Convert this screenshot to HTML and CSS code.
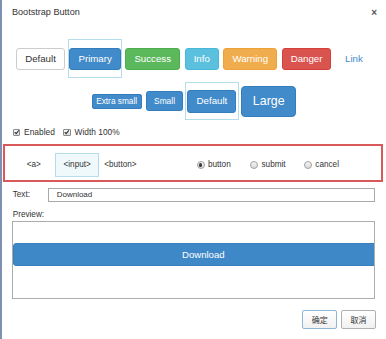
FILE: index.html
```html
<!DOCTYPE html>
<html>
<head>
<meta charset="utf-8">
<link rel="stylesheet" href="styles.css">
</head>
<body>
<div class="dialog">
  <div class="titlebar"><span class="title">Bootstrap Button</span><span class="close">×</span></div>

  <div class="row row1">
    <span class="btn btn-default">Default</span>
    <span class="btn btn-primary sel sel1">Primary</span>
    <span class="btn btn-success">Success</span>
    <span class="btn btn-info">Info</span>
    <span class="btn btn-warning">Warning</span>
    <span class="btn btn-danger">Danger</span>
    <span class="btn btn-link">Link</span>
  </div>

  <div class="row row2">
    <span class="btn btn-primary xs">Extra small</span>
    <span class="btn btn-primary sm">Small</span>
    <span class="btn btn-primary md sel sel2">Default</span>
    <span class="btn btn-primary lg">Large</span>
  </div>

  <div class="checks">
    <span class="cb"><svg viewBox="0 0 8 8" width="6" height="6"><path d="M1 4.2 L3.1 6.3 L7 1.6" fill="none" stroke="#333" stroke-width="1.6"/></svg></span>
    <span class="cblabel">Enabled</span>
    <span class="cb cb2"><svg viewBox="0 0 8 8" width="6" height="6"><path d="M1 4.2 L3.1 6.3 L7 1.6" fill="none" stroke="#333" stroke-width="1.6"/></svg></span>
    <span class="cblabel">Width 100%</span>
  </div>

  <div class="redbox">
    <span class="tag tag-a">&lt;a&gt;</span>
    <span class="tag tag-input">&lt;input&gt;</span>
    <span class="tag tag-button">&lt;button&gt;</span>
    <span class="radio r1"><span class="rc checked"></span>button</span>
    <span class="radio r2"><span class="rc"></span>submit</span>
    <span class="radio r3"><span class="rc"></span>cancel</span>
  </div>

  <div class="field">
    <span class="flabel">Text:</span>
    <span class="finput">Download</span>
  </div>

  <div class="plabel">Preview:</div>
  <div class="preview">
    <div class="pbtn">Download</div>
  </div>

  <div class="footer">
    <span class="fbtn focus">确定</span>
    <span class="fbtn">取消</span>
  </div>
</div>
</body>
</html>
```

FILE: styles.css
```css
html, body {
  margin: 0;
  padding: 0;
  background: #fff;
}
body {
  font-family: "Liberation Sans", Arial, "Noto Sans CJK SC", sans-serif;
  color: #333;
}
.dialog {
  border-left: 2px solid #7e91b3;
  height: 339px;
  box-sizing: border-box;
  overflow: hidden;
}
.titlebar {
  height: 24px;
  display: flex;
  align-items: center;
  justify-content: space-between;
  padding: 0 9px 0 10px;
  font-size: 9.1px;
  color: #333;
}
.close {
  font-size: 10px;
  font-weight: bold;
  color: #555;
}

.row {
  display: flex;
  justify-content: center;
  align-items: center;
  gap: 4.6px;
}
.row1 {
  margin-top: 23.7px;
  height: 22.3px;
}
.row2 {
  margin-top: 15.7px;
  height: 31.3px;
}
.btn {
  position: relative;
  display: flex;
  align-items: center;
  justify-content: center;
  box-sizing: border-box;
  border: 1px solid transparent;
  border-radius: 3px;
  line-height: 1;
  white-space: nowrap;
}
.row1 .btn {
  height: 22.3px;
  padding: 0 8px;
  font-size: 9.7px;
}
.btn-default { background: #fff; border-color: #ccc; color: #333; }
.btn-primary { background: #428bca; border-color: #357ebd; color: #fff; }
.btn-success { background: #5cb85c; border-color: #4cae4c; color: #fff; }
.btn-info { background: #5bc0de; border-color: #46b8da; color: #fff; }
.btn-warning { background: #f0ad4e; border-color: #eea236; color: #fff; }
.btn-danger { background: #d9534f; border-color: #d43f3a; color: #fff; }
.btn-link { background: transparent; color: #428bca; }

.row2 .xs { height: 15px; padding: 0 3.5px; font-size: 8.3px; border-radius: 2px; }
.row2 .sm { height: 20px; padding: 0 6.8px; font-size: 8.4px; border-radius: 2.5px; }
.row2 .md { height: 22.6px; padding: 0 8.2px; font-size: 9.7px; }
.row2 .lg { height: 31.3px; padding: 0 10.8px; font-size: 12.4px; border-radius: 4px; }

.sel::before {
  content: "";
  position: absolute;
  border: 1px solid #b3dde9;
  pointer-events: none;
}
.sel1::before { top: -9.7px; bottom: -8.7px; left: -2.6px; right: -2.6px; }
.sel2::before { top: -9.4px; bottom: -8.7px; left: -3.7px; right: -3.7px; }

.checks {
  margin-top: 10.5px;
  height: 10px;
  display: flex;
  align-items: center;
  padding-left: 10.7px;
  font-size: 8.4px;
}
.cb {
  width: 7.6px;
  height: 7.6px;
  box-sizing: border-box;
  border: 1px solid #8a8a8a;
  border-radius: 1px;
  background: linear-gradient(#fdfdfd, #dcdcdc);
  display: flex;
  align-items: center;
  justify-content: center;
  margin-right: 3.8px;
}
.cb2 { margin-left: 8.3px; }

.redbox {
  margin: 6.8px 3px 0 1px;
  border: 2px solid #d9585a;
  padding: 6.4px 0 3px 21.7px;
  height: 24.6px;
  display: flex;
  align-items: center;
  font-size: 8.2px;
  color: #333;
}
.tag-input {
  margin-left: 14.3px;
  height: 24.6px;
  box-sizing: border-box;
  padding: 0 7.4px;
  display: flex;
  align-items: center;
  background: #eff9fc;
  border: 1px solid #b6dcea;
}
.tag-button { margin-left: 5px; }
.radio {
  display: flex;
  align-items: center;
}
.r1 { margin-left: 60px; }
.r2 { margin-left: 19.4px; }
.r3 { margin-left: 18.3px; }
.rc {
  width: 8px;
  height: 8px;
  box-sizing: border-box;
  border-radius: 50%;
  border: 1px solid #a0a0a0;
  background: linear-gradient(#f6f6f6, #d9d9d9);
  margin-right: 3.4px;
  display: flex;
  align-items: center;
  justify-content: center;
}
.rc.checked::after {
  content: "";
  width: 3.4px;
  height: 3.4px;
  border-radius: 50%;
  background: #3a3a3a;
}

.field {
  margin-top: 5.4px;
  display: flex;
  align-items: center;
  padding: 0 11px 0 10.7px;
  font-size: 8.2px;
}
.flabel { width: 35.6px; }
.finput {
  flex: 1;
  height: 14.6px;
  box-sizing: border-box;
  border: 1px solid #a9a9a9;
  padding-left: 7.4px;
  font-size: 8px;
  display: flex;
  align-items: center;
}
.plabel {
  margin-top: 7.4px;
  height: 10px;
  line-height: 10px;
  padding-left: 10.7px;
  font-size: 8.2px;
}
.preview {
  margin: 1.3px 11px 0 10.3px;
  height: 78px;
  box-sizing: border-box;
  border: 1px solid #acacac;
  overflow: hidden;
  padding-top: 20.7px;
}
.pbtn {
  width: 380px;
  height: 23px;
  box-sizing: border-box;
  background: #3f88c8;
  border: 1px solid #3a7fbd;
  border-radius: 3px;
  color: #fff;
  font-size: 9.6px;
  display: flex;
  align-items: center;
  justify-content: center;
}
.footer {
  margin-top: 10.7px;
  display: flex;
  justify-content: flex-end;
  gap: 3.7px;
  padding-right: 10px;
}
.fbtn {
  width: 35px;
  height: 19.3px;
  box-sizing: border-box;
  border: 1px solid #b0b0b0;
  border-radius: 2px;
  background: linear-gradient(#ffffff, #f1f1f1);
  font-size: 8px;
  font-family: "Noto Sans CJK SC", sans-serif;
  color: #333;
  display: flex;
  align-items: center;
  justify-content: center;
}
.fbtn.focus { border-color: #8db6d9; }
```
